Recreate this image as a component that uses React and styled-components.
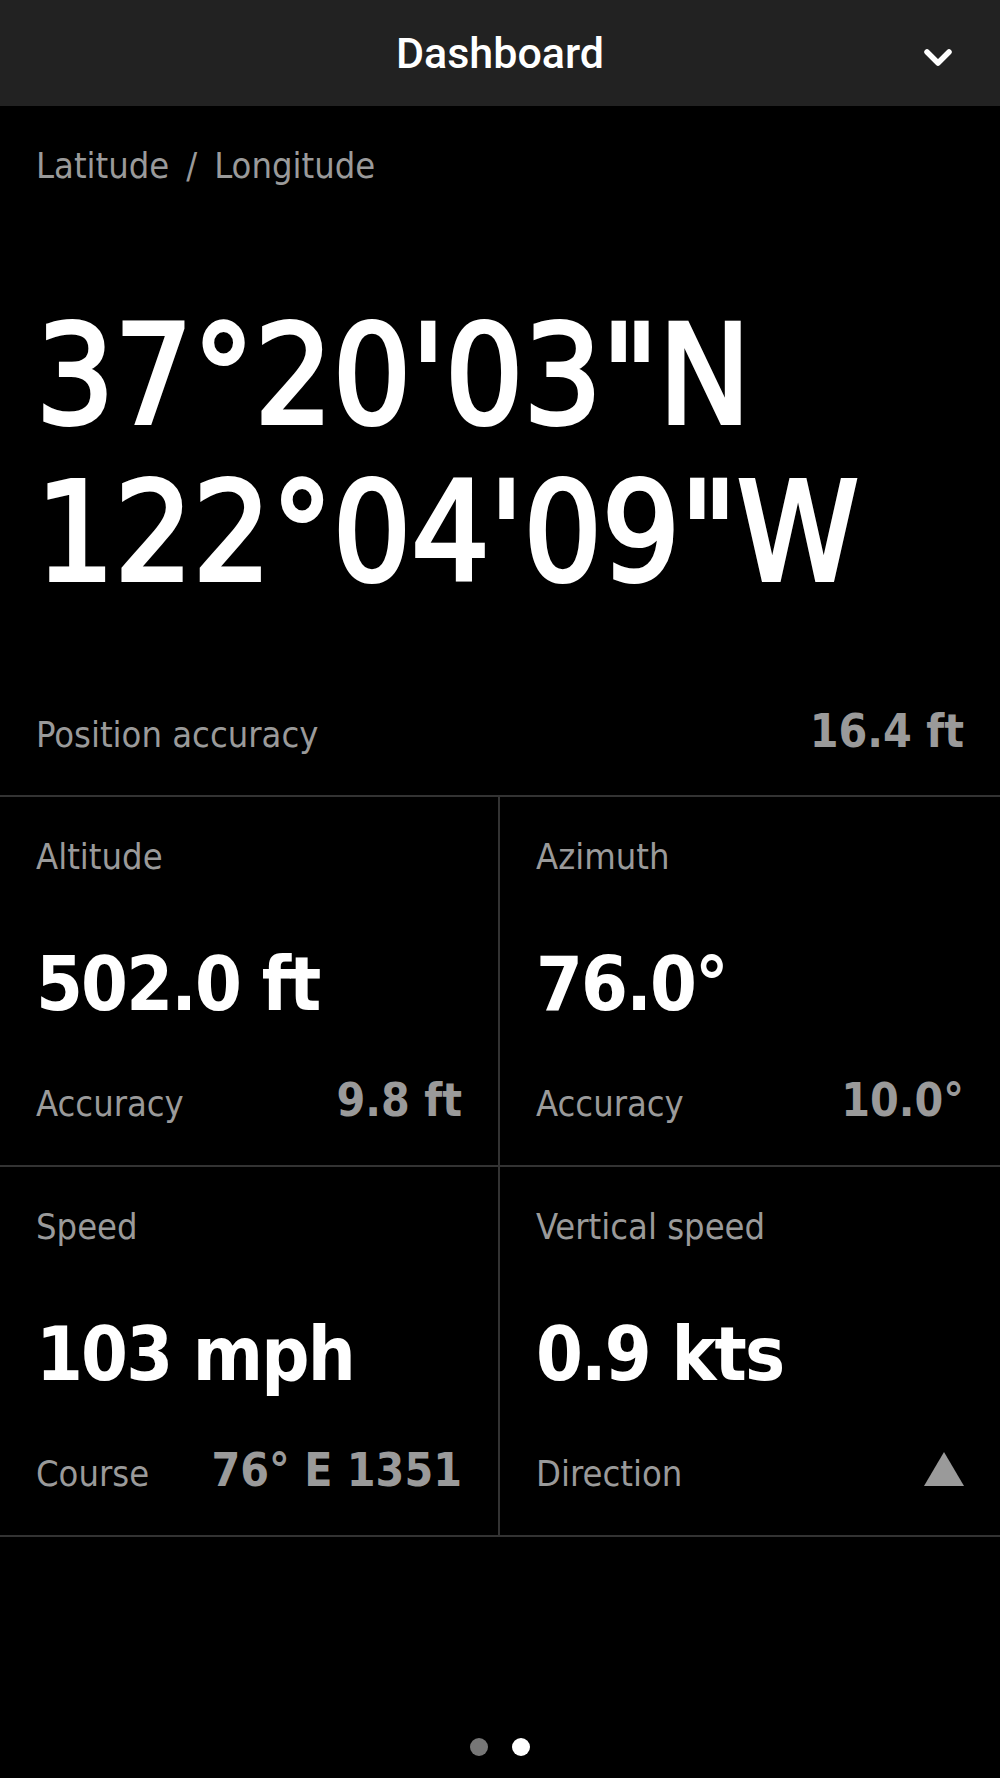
import styled, { createGlobalStyle } from "styled-components";

const GlobalStyle = createGlobalStyle`
  html, body {
    margin: 0;
    padding: 0;
    background: #000;
  }
  body {
    font-family: "DejaVu Sans Condensed", "DejaVu Sans", sans-serif;
    -webkit-font-smoothing: antialiased;
  }
`;

const cells = [
  { label: "Altitude", value: "502.0 ft", subLabel: "Accuracy", subValue: "9.8 ft" },
  { label: "Azimuth", value: "76.0°", subLabel: "Accuracy", subValue: "10.0°" },
  { label: "Speed", value: "103 mph", subLabel: "Course", subValue: "76° E 1351" },
  { label: "Vertical speed", value: "0.9 kts", subLabel: "Direction", arrow: true },
];

const App = () => {
  return (
    <Swrap>
      <GlobalStyle />
      <Sheader>
        <span />
        <Stitle>Dashboard</Stitle>
        <Schevron width="28" height="18" viewBox="0 0 28 18">
          <path
            d="M3 3 L14 14 L25 3"
            fill="none"
            stroke="#fff"
            strokeWidth="5.5"
            strokeLinecap="round"
            strokeLinejoin="round"
          />
        </Schevron>
      </Sheader>

      <Stop>
        <Slabel>
          Latitude<Sslash>/</Sslash>Longitude
        </Slabel>
        <Scoords>
          <div>{`37°20'03"N`}</div>
          <div>{`122°04'09"W`}</div>
        </Scoords>
        <Sfooter $gap={97}>
          <Slabel>Position accuracy</Slabel>
          <Ssub>16.4 ft</Ssub>
        </Sfooter>
      </Stop>

      <Sgrid>
        {cells.map((c, i) => (
          <Scell key={c.label} $left={i % 2 === 0}>
            <Slabel>{c.label}</Slabel>
            <Svalue>{c.value}</Svalue>
            <Sfooter $gap={55}>
              <Slabel>{c.subLabel}</Slabel>
              <Ssub>
                {c.arrow ? (
                  <Sarrow width="40" height="34" viewBox="0 0 40 34">
                    <polygon points="20,0 40,34 0,34" fill="#9a9a9a" />
                  </Sarrow>
                ) : (
                  c.subValue
                )}
              </Ssub>
            </Sfooter>
          </Scell>
        ))}
      </Sgrid>

      <Sspacer />

      <Sdots>
        <Sdot />
        <Sdot $active />
      </Sdots>
    </Swrap>
  );
};

export default App;

const Swrap = styled.div`
  min-height: 100vh;
  display: flex;
  flex-direction: column;
  background: #000;
  color: #fff;
`;

const Sheader = styled.header`
  height: 106px;
  background: #222;
  display: grid;
  grid-template-columns: 1fr auto 1fr;
  align-items: center;
  padding: 0 48px;
`;

const Stitle = styled.h1`
  margin: 0;
  font-family: Roboto, "Liberation Sans", sans-serif;
  font-stretch: normal;
  font-weight: 500;
  font-size: 43px;
  line-height: 43px;
  color: #fff;
`;

const Schevron = styled.svg`
  justify-self: end;
  margin-top: 9px;
`;

const Stop = styled.section`
  padding: 42px 36px 41px;
  border-bottom: 2px solid #333;
`;

const Slabel = styled.div`
  font-size: 36px;
  line-height: 36px;
  color: #9a9a9a;
  white-space: nowrap;
`;

const Sslash = styled.span`
  margin: 0 17px;
`;

const Scoords = styled.div`
  margin-top: 113px;
  font-size: 137px;
  line-height: 157px;
  font-weight: 400;
  -webkit-text-stroke: 4px #fff;
  white-space: nowrap;
  color: #fff;
`;

const Sfooter = styled.div`
  margin-top: ${(p) => p.$gap}px;
  display: flex;
  justify-content: space-between;
  align-items: baseline;
`;

const Ssub = styled.div`
  font-size: 46px;
  line-height: 46px;
  font-weight: 700;
  color: #9a9a9a;
  white-space: nowrap;
`;

const Sarrow = styled.svg`
  vertical-align: baseline;
`;

const Sgrid = styled.div`
  display: grid;
  grid-template-columns: 1fr 1fr;
`;

const Scell = styled.div`
  padding: 42px 36px;
  border-bottom: 2px solid #333;
  border-right: ${(p) => (p.$left ? "2px solid #333" : "none")};
`;

const Svalue = styled.div`
  margin-top: 72px;
  font-size: 75px;
  line-height: 75px;
  font-weight: 700;
  letter-spacing: -0.025em;
  white-space: nowrap;
  color: #fff;
`;

const Sspacer = styled.div`
  flex: 1;
`;

const Sdots = styled.div`
  display: flex;
  justify-content: center;
  gap: 24px;
  padding-bottom: 22px;
`;

const Sdot = styled.span`
  width: 18px;
  height: 18px;
  border-radius: 50%;
  background: ${(p) => (p.$active ? "#fff" : "#777")};
`;
